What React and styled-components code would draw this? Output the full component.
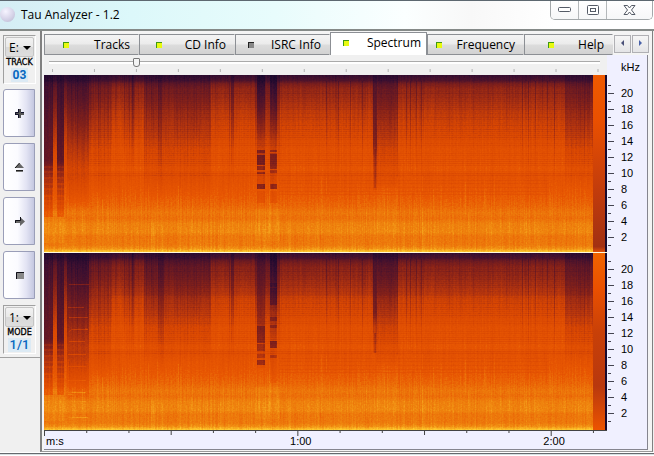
import React from "react";
import styled, { createGlobalStyle } from "styled-components";

const ui = '"Open Sans", "Noto Sans", sans-serif';
const small = '"Liberation Sans", Arial, sans-serif';

const GlobalStyle = createGlobalStyle`
  * { box-sizing: border-box; }
  body { margin: 0; background: #f0f0f0; color: #000; font-family: ${ui}; }
  button, select, input { font-family: inherit; color: inherit; margin: 0; }
`;

const Window = styled.div`
  display: flex;
  flex-direction: column;
  min-height: 100vh;
  background: #f0f0f0;
`;

const TitleBar = styled.header`
  display: flex;
  align-items: flex-start;
  height: 31px;
  border-top: 1px solid #5d6870;
  border-bottom: 2px solid #858a88;
  background: linear-gradient(90deg, #d5edf4 0%, #dcf8fa 20%, #e8fcfc 42%, #fbffff 62%, #f8f8f8 72%, #ffffff 85%);
`;

const Orb = styled.span`
  width: 15px;
  height: 15px;
  margin: 6px 6px 0 0;
  border-radius: 50%;
  background: radial-gradient(circle at 38% 30%, #f6f4ff, #d6d3e8 55%, #b6b5cd);
`;

const Title = styled.h1`
  flex: 1;
  margin: 0;
  font-size: 12px;
  font-weight: 400;
  line-height: 28px;
`;

const Controls = styled.div`
  display: flex;
  height: 19px;
  margin-right: 1px;
  border: 1px solid #a3a8aa;
  border-top: 0;
  border-radius: 0 0 5px 5px;
  overflow: hidden;
`;

const Control = styled.button`
  display: grid;
  place-items: center;
  width: ${(p) => p.$width}px;
  padding: 0;
  border: 0;
  border-left: ${(p) => (p.$first ? "0" : "1px solid #b4b8ba")};
  background: linear-gradient(#ffffff, #f6f7f8);
`;

const Body = styled.div`
  display: flex;
  flex: 1;
`;

const Side = styled.aside`
  width: 40px;
  flex: none;
`;

const SideTools = styled.div`
  display: flex;
  flex-direction: column;
  gap: 6px;
  padding: 4px 4px 4px 3px;
  border-bottom: 1px solid #a0a0a0;
`;

const Group = styled.div`
  display: flex;
  flex-direction: column;
  align-items: center;
  height: 49px;
  padding: 1px;
  margin-bottom: -1px;
  border: 1px solid #a0a0a0;
  border-right-color: #fff;
  border-bottom-color: #fff;
`;

const Picker = styled.span`
  position: relative;
  display: block;
  flex: none;
  width: 100%;
  height: 20px;
`;

const Select = styled.select`
  appearance: none;
  display: block;
  width: 100%;
  height: 20px;
  padding: 0 0 0 3px;
  border: 1px solid #c4c4c4;
  border-radius: 2px;
  background: linear-gradient(#f2f2f2 0%, #e9e9e9 50%, #d9d9d9 51%, #dedede 100%);
  font-size: 12px;
`;

const Caret = styled.svg`
  position: absolute;
  right: 3px;
  top: 9px;
  pointer-events: none;
`;

const PickerLabel = styled.label`
  margin-top: 1px;
  font: 8px/10px "DejaVu Sans", sans-serif;
  -webkit-text-stroke: 0.3px #000;
`;

const Readout = styled.output`
  padding: 0 2px;
  background: #dceaf4;
  color: #0868c0;
  font: ${(p) => (p.$bold ? 700 : 500)} ${(p) => (p.$bold ? 12 : 13)}px/14px Roboto, sans-serif;
`;

const ToolStack = styled.div`
  display: flex;
  flex-direction: column;
  gap: 6px;
`;

const Tool = styled.button`
  display: grid;
  place-items: center;
  width: 32px;
  height: 48px;
  padding: 0;
  border: 1px solid #9a9eb8;
  border-radius: 3px 0 0 3px;
  background: linear-gradient(90deg, #ffffff 0%, #fbfbff 45%, #e2e3f3 75%, #c4c7e0 100%);
`;

const Main = styled.main`
  display: flex;
  flex-direction: column;
  flex: 1;
  min-width: 0;
  margin-right: 1px;
  padding: 1px 2px 1px;
  border: 1px solid #808080;
  border-left-width: 2px;
  border-top: 0;
  border-bottom-color: #999;
  background: #f4f4f4;
`;

const TabBar = styled.div`
  display: flex;
  height: 23px;
`;

const Tabs = styled.div`
  display: grid;
  grid-template-columns: 95fr 96fr 95fr 97fr 97fr 89fr;
  align-items: end;
  flex: 1;
  min-width: 0;
`;

const Tab = styled.button`
  display: flex;
  align-items: center;
  justify-content: space-between;
  min-width: 0;
  height: ${(p) => (p.$active ? 23 : 21)}px;
  padding: 0 ${(p) => (p.$active ? 5 : 8)}px ${(p) => (p.$active ? 3 : 0)}px ${(p) => p.$lead}px;
  border: 1px solid #8c8f94;
  border-right-color: ${(p) => (p.$active ? "#8c8f94" : "transparent")};
  border-bottom: ${(p) => (p.$active ? "0" : "1px solid #8c8f94")};
  background: ${(p) =>
    p.$active ? "#fff" : "linear-gradient(#f4f4f4 0%, #ebebeb 48%, #dcdcdc 52%, #d2d2d2 100%)"};
  font-size: 12px;
  line-height: 16px;
  white-space: nowrap;
`;

const Lamp = styled.span`
  flex: none;
  width: 6px;
  height: 6px;
  border: solid ${(p) => (p.$on ? "#3f9a14" : "#222")};
  border-width: 1px 0 0 1px;
  background: ${(p) => (p.$on ? "#e8fa10" : "#888")};
`;

const Scrollers = styled.div`
  display: flex;
  align-self: center;
  gap: 1px;
  margin: 0 1px 0 1px;
`;

const Scroller = styled.button`
  display: grid;
  place-items: center;
  width: 17px;
  height: 18px;
  padding: 0;
  border: 1px solid #b0b0b4;
  background: linear-gradient(#f6f6f6, #e4e4e6);
`;

const Panel = styled.section`
  display: grid;
  grid-template-columns: minmax(0, 1fr) 40px;
  grid-template-rows: 20px 354px 1fr;
  flex: 1;
  margin-right: 2px;
  border: 0 solid #85858f;
  border-width: 0 1px 1px 0;
  background: #f0f0ff;
`;

const Position = styled.div`
  padding: 2px 7px 0 5px;
  background: #f0f0f0;
`;

const Range = styled.input`
  appearance: none;
  display: block;
  width: 100%;
  height: 11px;
  background: linear-gradient(#aaa, #aaa) 0 4px / 100% 1px no-repeat, linear-gradient(#fff, #fff) 0 5px / 100% 2px no-repeat;
  &::-webkit-slider-thumb {
    appearance: none;
    width: 7px;
    height: 9px;
    border: 1px solid #777;
    border-radius: 1px 1px 3px 3px;
    background: #f4f4f4;
  }
`;

const Drawing = styled.svg`
  display: block;
  width: 100%;
  height: ${(p) => p.$height}px;
`;

const Unit = styled.div`
  padding-left: 14px;
  font: 11px/24px ${small};
`;

const Footer = styled.footer`
  height: 4px;
  border-top: 1px solid #fff;
  background: linear-gradient(#646a6e 0 1px, #d9dfe2 1px 2px, #fff 2px);
`;

function random(seed) {
  let s = seed;
  return () => {
    s = (s * 16807) % 2147483647;
    return s / 2147483647;
  };
}

const gray = (v) => {
  const n = Math.round(v * 255);
  return `rgb(${n},${n},${n})`;
};

const profile = [
  [0, 0.1], [0.03, 0.19], [0.05, 0.34], [0.08, 0.42], [0.13, 0.46], [0.2, 0.54], [0.3, 0.62], [0.42, 0.7],
  [0.54, 0.74], [0.56, 0.7], [0.66, 0.74], [0.74, 0.79], [0.78, 0.83], [0.81, 0.81],
  [0.84, 0.86], [0.89, 0.87], [0.91, 0.83], [0.96, 0.84], [0.98, 0.89], [1, 1],
];

// x, width, height, opacity, gradient
const shadows = [
  [
    [0, 9, 142, 0.82, "hard"], [13, 7, 142, 0.86, "hard"], [9, 4, 110, 0.42, "soft"],
    [20, 3, 110, 0.35, "soft"], [23, 22, 135, 0.56, "soft"], [45, 22, 120, 0.24, "soft"],
    [80, 10, 110, 0.1, "soft"], [100, 67, 125, 0.3, "soft"], [114, 4, 130, 0.26, "soft"],
    [88, 2, 100, 0.34, "soft"], [187, 3, 110, 0.4, "soft"], [211, 25, 100, 0.26, "soft"],
    [213, 8, 52, 0.68, "soft"], [226, 7, 52, 0.72, "soft"], [213, 8, 90, 0.3, "hard"],
    [226, 7, 90, 0.3, "hard"], [329, 4, 115, 0.6, "hard"], [333, 21, 115, 0.4, "soft"],
    [521, 28, 115, 0.3, "soft"],
  ],
  [
    [0, 9, 142, 0.82, "hard"], [13, 7, 142, 0.86, "hard"], [9, 4, 110, 0.42, "soft"],
    [20, 3, 110, 0.35, "soft"], [23, 22, 150, 0.74, "soft"], [45, 22, 125, 0.3, "soft"],
    [80, 10, 110, 0.1, "soft"], [100, 67, 110, 0.36, "soft"], [114, 6, 120, 0.34, "soft"],
    [88, 2, 100, 0.34, "soft"], [187, 3, 110, 0.4, "soft"], [211, 25, 100, 0.3, "soft"],
    [213, 8, 115, 0.35, "hard"], [226, 7, 60, 0.78, "soft"], [226, 7, 130, 0.25, "hard"],
    [329, 4, 100, 0.6, "hard"], [333, 21, 110, 0.48, "soft"], [521, 28, 115, 0.36, "soft"],
  ],
];

// x, y, width, height, opacity
const blocks = [
  [
    [213, 75, 8, 3, 0.4], [213, 80, 8, 10, 0.42], [213, 91, 8, 4, 0.35], [213, 97, 8, 2, 0.3],
    [213, 109, 8, 5, 0.4], [226, 75, 7, 2, 0.3], [226, 79, 7, 15, 0.35], [226, 95, 7, 3, 0.25],
    [226, 109, 7, 5, 0.36], [213, 78, 8, 36, 0.12], [226, 78, 7, 36, 0.12],
    [213, 116, 8, 12, 0.08], [226, 116, 7, 12, 0.08], [330, 74, 2, 39, 0.16],
  ],
  [
    [213, 73, 8, 17, 0.32], [213, 91, 8, 7, 0.28], [213, 101, 8, 4, 0.22], [213, 107, 8, 5, 0.35],
    [226, 30, 7, 4, 0.3], [226, 35, 7, 17, 0.32], [226, 64, 7, 4, 0.25], [226, 72, 7, 3, 0.25],
    [226, 88, 7, 7, 0.4], [226, 102, 7, 3, 0.22], [330, 80, 2, 20, 0.16],
  ],
];

const lines = [185, 282, 294, 306, 318, 362, 366, 372, 377, 478, 484, 491, 503, 510, 540];
const columns = (() => {
  const r = random(417);
  const out = [];
  for (let x = 24; x < 549; x += 1) {
    const busy = (x > 24 && x < 167) || x > 520;
    if (r() < (busy ? 0.5 : 0.2)) {
      out.push([x, 50 + r() * 85, r() * (busy ? 0.24 : 0.09)]);
    }
  }
  return out;
})();

const glows = (() => {
  const r = random(91);
  return Array.from({ length: 180 }, () => {
    const y = 100 + r() * 60;
    return [Math.floor(r() * 548), Math.floor(y), 1, Math.floor(12 + r() * 25), 0.04 + r() * 0.11];
  });
})();

const striations = (() => {
  const r = random(33);
  return Array.from({ length: 44 }, (_, i) => [14 + i * 2, r() * 0.09]);
})();

function Channel({ index }) {
  return (
    <g>
      <g filter="url(#heat)">
        <rect width="563" height="177" fill="url(#profile)" />
        {striations.map(([y, o]) => (
          <rect key={y} x="45" y={y} width="504" height="1" fill="#000" opacity={o} />
        ))}
        {[105, 108, 112, 116, 119].map((y) => (
          <rect key={y} x="235" y={y} width="270" height="1" fill="#000" opacity="0.05" />
        ))}
        {index === 1 && <rect x="67" y="8" width="482" height="34" fill="#000" opacity="0.07" />}
        {shadows[index].map(([x, w, h, o, kind], i) => (
          <rect key={i} x={x} width={w} height={h} fill={`url(#${kind})`} opacity={o} />
        ))}
        {columns.map(([x, h, o]) => (
          <rect key={x} x={x} width="1" height={h} fill="url(#soft)" opacity={o} />
        ))}
        {lines.map((x) => (
          <rect key={x} x={x} y="6" width="1" height="100" fill="url(#soft)" opacity="0.3" />
        ))}
        {blocks[index].map(([x, y, w, h, o], i) => (
          <rect key={i} x={x} y={y} width={w} height={h} fill="#000" opacity={o} />
        ))}
        {[92, 97, 103, 109, 114, 121, 126, 131, 135].map((y) => (
          <path key={y} d={`M0 ${y}h9M13 ${y}h7`} stroke="#fff" strokeWidth="2" opacity="0.09" />
        ))}
        {glows.map(([x, y, w, h, o], i) => (
          <rect key={i} x={x} y={y} width={w} height={h} fill="#fff" opacity={o} />
        ))}
        <rect y="136" width="20" height="32" fill="#fff" opacity="0.16" />
        <rect x="211" y="134" width="25" height="32" fill="#fff" opacity="0.12" />
        <rect x="333" y="112" width="21" height="45" fill="#fff" opacity="0.08" />
        {index === 1 && (
          <path
            d="M25 31.5h20M25 64.5h19M28 76.5h16l-3-1M25 78.5l3-2M24 101.5h18M24 127.5h18M24 139.5h17M24 164.5h20M24 54.5h16M25 88.5h16M24 113.5h18M24 148.5h18"
            fill="none"
            stroke="#fff"
            opacity="0.2"
          />
        )}
        {index === 1 && (
          <path d="M28 139.5h14M24 141.5h4M28 164.5h16" stroke="#fff" opacity="0.3" />
        )}
      </g>
      <rect x="549" width="13" height="177" fill={`url(#tail${index})`} />
      <rect x="561" width="2" height="177" fill="#170a2d" />
    </g>
  );
}

function Spectrogram() {
  return (
    <Drawing $height={355} viewBox="0 0 563 355" preserveAspectRatio="none" role="img" aria-label="Spectrum of both channels">
      <defs>
        <linearGradient id="profile" x1="0" y1="0" x2="0" y2="1">
          {profile.map(([o, v]) => (
            <stop key={o} offset={o} stopColor={gray(v)} />
          ))}
        </linearGradient>
        <linearGradient id="soft" x1="0" y1="0" x2="0" y2="1">
          <stop offset="0" stopColor="#000" />
          <stop offset="0.35" stopColor="#000" stopOpacity="0.65" />
          <stop offset="1" stopColor="#000" stopOpacity="0" />
        </linearGradient>
        <linearGradient id="hard" x1="0" y1="0" x2="0" y2="1">
          <stop offset="0" stopColor="#000" stopOpacity="0.75" />
          <stop offset="0.6" stopColor="#000" stopOpacity="0.76" />
          <stop offset="0.72" stopColor="#000" stopOpacity="0.42" />
          <stop offset="1" stopColor="#000" stopOpacity="0.14" />
        </linearGradient>
        <linearGradient id="tail0" x1="0" y1="0" x2="0" y2="1">
          <stop offset="0" stopColor="#ef5a00" />
          <stop offset="0.25" stopColor="#ea5000" />
          <stop offset="0.65" stopColor="#c23c0c" />
          <stop offset="0.97" stopColor="#a23012" />
          <stop offset="1" stopColor="#e05008" />
        </linearGradient>
        <linearGradient id="tail1" x1="0" y1="0" x2="0" y2="1">
          <stop offset="0" stopColor="#f06400" />
          <stop offset="0.2" stopColor="#ea5000" />
          <stop offset="0.45" stopColor="#c84008" />
          <stop offset="0.75" stopColor="#b8380e" />
          <stop offset="1" stopColor="#ec5400" />
        </linearGradient>
        <filter id="heat" x="0" y="0" width="100%" height="100%" colorInterpolationFilters="sRGB">
          <feTurbulence type="fractalNoise" baseFrequency="0.6 0.015" numOctaves="2" seed="4" />
          <feColorMatrix values="1 0 0 0 0 1 0 0 0 0 1 0 0 0 0 0 0 0 0 1" result="vertical" />
          <feTurbulence type="fractalNoise" baseFrequency="0.55 0.7" numOctaves="2" seed="9" />
          <feColorMatrix values="1 0 0 0 0 1 0 0 0 0 1 0 0 0 0 0 0 0 0 1" result="grain" />
          <feComposite in="SourceGraphic" in2="vertical" operator="arithmetic" k2="1" k3="0.1" k4="-0.05" result="streaked" />
          <feComposite in="streaked" in2="grain" operator="arithmetic" k2="1" k3="0.09" k4="-0.045" />
          <feColorMatrix values="1 0 0 0 0 0 1 0 0 0 0 0 1 0 0 0 0 0 0 1" />
          <feComponentTransfer>
            <feFuncR type="table" tableValues="0.09 0.23 0.37 0.52 0.69 0.85 0.91 0.94 1" />
            <feFuncG type="table" tableValues="0.03 0.06 0.09 0.13 0.20 0.28 0.34 0.53 0.8" />
            <feFuncB type="table" tableValues="0.18 0.19 0.15 0.10 0.06 0.01 0.01 0.06 0.19" />
          </feComponentTransfer>
        </filter>
      </defs>
      <Channel index={0} />
      <rect y="177" width="563" height="1" fill="#fff8dc" />
      <g transform="translate(0 178)">
        <Channel index={1} />
      </g>
    </Drawing>
  );
}

function FrequencyAxis() {
  const marks = [];
  [18, 194].forEach((top) => {
    for (let i = 0; i < 10; i += 1) marks.push({ y: top + i * 16, label: 20 - i * 2 });
  });
  return (
    <Drawing $height={354} fontFamily={small} fontSize="11">
      {marks.map(({ y, label }) => (
        <g key={y}>
          <path d={`M1 ${y - 7.5}h3M1 ${y + 0.5}h6`} stroke="#444450" />
          <text x="14" y={y + 4}>{label}</text>
        </g>
      ))}
      <path d="M1 170.5h3M1 346.5h3" stroke="#444450" />
    </Drawing>
  );
}

function TimeAxis() {
  return (
    <Drawing $height={18} fontFamily={small} fontSize="11">
      <rect y="1" width="100%" height="1" fill="#444" />
      {Array.from({ length: 14 }, (_, i) => (
        <rect key={i} x={`${i * 7.5}%`} y="2" width="1" height={i % 6 === 0 ? 5 : i % 3 === 0 ? 4 : 2} fill="#444" />
      ))}
      <text x="2" y="16">m:s</text>
      <text x="45.6%" y="16" textAnchor="middle">1:00</text>
      <text x="90.6%" y="16" textAnchor="middle">2:00</text>
    </Drawing>
  );
}

function SliderTicks() {
  return (
    <Drawing $height={5}>
      <svg x="3" width="99%" height="5" overflow="visible">
        {Array.from({ length: 14 }, (_, i) => (
          <rect key={i} x={`${(i * 100) / 13}%`} y="1" width="1" height="3" fill="#b4b4b4" />
        ))}
      </svg>
    </Drawing>
  );
}

const toolShapes = {
  Add: (
    <>
      <path d="M4 1h3v3h3v3H7v3H4V7H1V4h3z" fill="#555" />
      <path d="M4.5 10V6.5H1M1.5 7V4.5H4.5V1M7 4.5h3" fill="none" stroke="#101028" />
    </>
  ),
  Eject: (
    <>
      <path d="M5.5 1L10 6H1z" fill="#666" />
      <path d="M5.5 1L1 6" stroke="#101010" />
      <path d="M2 8h7v2H2z" fill="#777" />
      <path d="M2 8.5h7" stroke="#202020" />
    </>
  ),
  Next: (
    <>
      <path d="M1 4h5V1l5 4.5L6 10V7H1z" fill="#666" />
      <path d="M1.5 7V4.5H6.5V1" fill="none" stroke="#101018" />
    </>
  ),
  Stop: (
    <>
      <path d="M2 2h8v7H2z" fill="#888" />
      <path d="M2.5 9V2.5H10" fill="none" stroke="#101018" />
    </>
  ),
};

function SidePicker({ id, value, caption, readout, bold }) {
  return (
    <Group>
      <Picker>
        <Select id={id} defaultValue={value}>
          <option>{value}</option>
        </Select>
        <Caret width="8" height="5" aria-hidden="true">
          <path d="M0 0h8L4 4z" />
        </Caret>
      </Picker>
      <PickerLabel htmlFor={id}>{caption}</PickerLabel>
      <Readout htmlFor={id} $bold={bold}>{readout}</Readout>
    </Group>
  );
}

const tabs = [
  { name: "Tracks", on: true, lead: 18 },
  { name: "CD Info", on: true, lead: 16 },
  { name: "ISRC Info", on: false, lead: 12 },
  { name: "Spectrum", on: true, lead: 12, active: true },
  { name: "Frequency", on: true, lead: 8 },
  { name: "Help", on: true, lead: 23 },
];

export default function App() {
  return (
    <Window>
      <GlobalStyle />
      <TitleBar>
        <Orb />
        <Title>Tau Analyzer - 1.2</Title>
        <Controls>
          <Control $width={27} $first aria-label="Minimize">
            <svg width="13" height="6"><rect x="0.5" y="0.5" width="12" height="4" rx="1" fill="#fff" stroke="#555b66" /></svg>
          </Control>
          <Control $width={28} aria-label="Maximize">
            <svg width="12" height="11">
              <rect x="0.5" y="0.5" width="11" height="9" rx="1" fill="#fff" stroke="#555b66" />
              <rect x="3.5" y="3.5" width="5" height="3" fill="#fff" stroke="#555b66" />
            </svg>
          </Control>
          <Control $width={46} aria-label="Close">
            <svg width="13" height="11">
              <path d="M1 .5h3.5l2 2.5 2-2.5H12L8.5 5l3.5 4.5H8.5l-2-2.5-2 2.5H1L4.5 5z" fill="#fff" stroke="#555b66" />
            </svg>
          </Control>
        </Controls>
      </TitleBar>
      <Body>
        <Side>
          <SideTools>
            <SidePicker id="drive" value="E:" caption="TRACK" readout="03" bold />
            <ToolStack>
              {Object.entries(toolShapes).map(([name, shape]) => (
                <Tool key={name} aria-label={name}>
                  <svg width="11" height="11">{shape}</svg>
                </Tool>
              ))}
            </ToolStack>
            <SidePicker id="mode" value="1:" caption="MODE" readout="1/1" />
          </SideTools>
        </Side>
        <Main>
          <TabBar>
            <Tabs role="tablist">
              {tabs.map((t) => (
                <Tab key={t.name} role="tab" aria-selected={!!t.active} $active={t.active} $lead={t.lead}>
                  <Lamp $on={t.on} />
                  {t.name}
                </Tab>
              ))}
            </Tabs>
            <Scrollers>
              <Scroller aria-label="Scroll tabs left">
                <svg width="5" height="7"><path d="M4 0v6L1 3z" fill="#4a5078" /></svg>
              </Scroller>
              <Scroller aria-label="Scroll tabs right">
                <svg width="5" height="7"><path d="M1 0v6l3-3z" fill="#4a62a8" /></svg>
              </Scroller>
            </Scrollers>
          </TabBar>
          <Panel>
            <Position>
              <Range type="range" min="0" max="13" defaultValue="2" aria-label="Position" />
              <SliderTicks />
            </Position>
            <Unit>kHz</Unit>
            <Spectrogram />
            <FrequencyAxis />
            <TimeAxis />
          </Panel>
        </Main>
      </Body>
      <Footer />
    </Window>
  );
}
